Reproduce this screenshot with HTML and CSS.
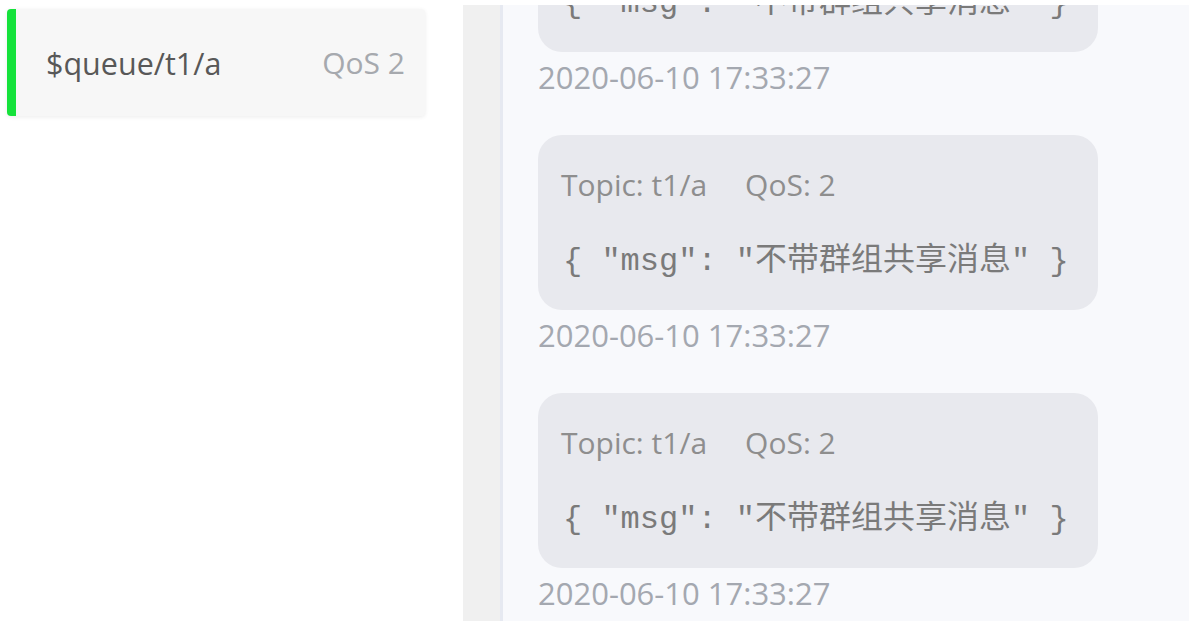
FILE: index.html
```html
<!DOCTYPE html>
<html lang="zh-CN">
<head>
<meta charset="utf-8">
<title>Messages</title>
<link rel="stylesheet" href="styles.css">
</head>
<body>
<div class="app">
  <aside class="sidebar">
    <div class="sub-card">
      <span class="sub-topic">$queue/t1/a</span>
      <span class="sub-qos">QoS 2</span>
    </div>
  </aside>
  <main class="main">
    <div class="gutter"></div>
    <section class="panel">
      <div class="msg-list">
        <div class="msg">
          <div class="bubble">
            <div class="meta"><span>Topic: t1/a</span><span>QoS: 2</span></div>
            <div class="payload">{ "msg": "不带群组共享消息" }</div>
          </div>
          <div class="time">2020-06-10 17:33:27</div>
        </div>
        <div class="msg">
          <div class="bubble">
            <div class="meta"><span>Topic: t1/a</span><span>QoS: 2</span></div>
            <div class="payload">{ "msg": "不带群组共享消息" }</div>
          </div>
          <div class="time">2020-06-10 17:33:27</div>
        </div>
        <div class="msg">
          <div class="bubble">
            <div class="meta"><span>Topic: t1/a</span><span>QoS: 2</span></div>
            <div class="payload">{ "msg": "不带群组共享消息" }</div>
          </div>
          <div class="time">2020-06-10 17:33:27</div>
        </div>
      </div>
    </section>
  </main>
</div>
</body>
</html>
```

FILE: styles.css
```css
html, body {
  margin: 0;
  padding: 0;
  background: #ffffff;
  height: 630px;
  overflow: hidden;
}

body {
  font-family: "Open Sans", "Noto Sans CJK SC", sans-serif;
  font-size: 30px;
}

.app {
  display: flex;
  height: 630px;
}

.sidebar {
  width: 463px;
  flex: none;
  padding: 9px 0 0 7px;
  box-sizing: border-box;
}

.sub-card {
  width: 418px;
  height: 107px;
  box-sizing: border-box;
  display: flex;
  align-items: center;
  justify-content: space-between;
  background: #f7f7f7;
  border-left: 9px solid #15e23b;
  border-radius: 4px;
  box-shadow: 0 1px 4px rgba(0, 0, 0, 0.08);
  padding: 0 20px 0 30px;
}

.sub-topic {
  color: #585858;
  font-size: 30.5px;
}

.sub-qos {
  color: #a6a9ae;
}

.main {
  flex: 1;
  display: flex;
  margin: 5px 7px 9px 0;
}

.gutter {
  width: 37px;
  flex: none;
  background: #f0f0f0;
}

.panel {
  flex: 1;
  background: #f8f9fc;
  border-left: 3px solid #e6e9f1;
  overflow: hidden;
  padding-left: 35px;
}

.msg-list {
  margin-top: -128px;
}

.msg {
  margin-bottom: 38px;
}

.bubble {
  display: inline-block;
  background: #e8e9ee;
  border-radius: 24px;
  padding: 30px 29px 28px 23px;
}

.meta {
  display: flex;
  gap: 38px;
  color: #8e8e8e;
  line-height: 40px;
}

.payload {
  margin-top: 37px;
  font-family: "Liberation Mono", "Noto Sans CJK SC", monospace;
  font-size: 32px;
  line-height: 40px;
  color: #7a7a7a;
  padding-left: 2px;
  white-space: pre;
}

.time {
  margin-top: 5px;
  line-height: 40px;
  font-size: 31px;
  color: #a4a8b0;
}
```
